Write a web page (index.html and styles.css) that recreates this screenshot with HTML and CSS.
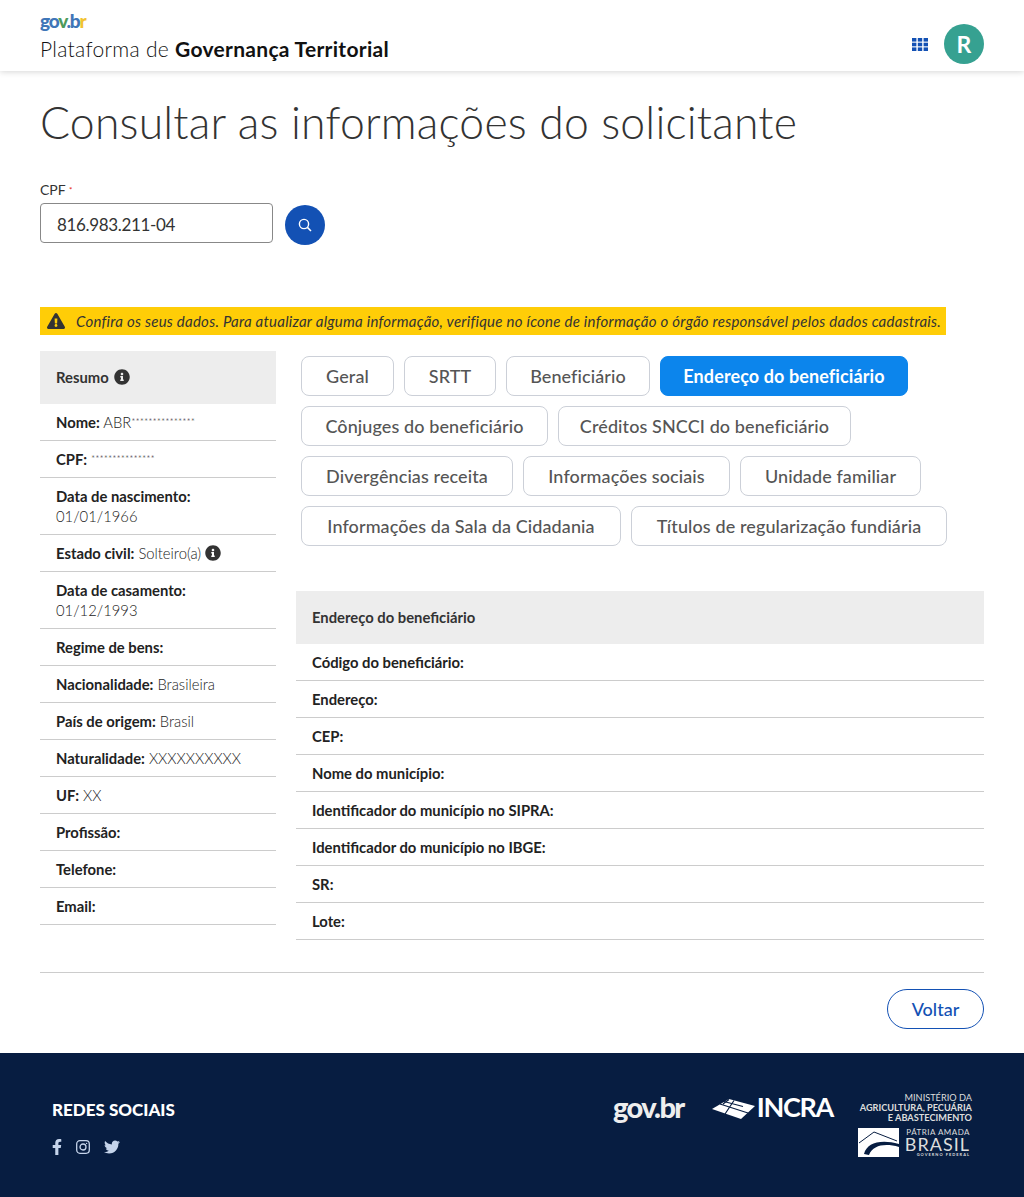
FILE: index.html
```html
<!DOCTYPE html>
<html lang="pt-BR">
<head>
<meta charset="UTF-8">
<meta name="viewport" content="width=device-width, initial-scale=1.0">
<title>Plataforma de Governança Territorial</title>
<link rel="stylesheet" href="styles.css">
</head>
<body>

<header class="topbar">
  <div class="brand">
    <div class="brand-logo"><span class="c-blue">go</span><span class="c-green">v</span><span class="c-blue">.b</span><span class="c-yellow">r</span></div>
    <div class="brand-name">Plataforma de <strong>Governança Territorial</strong></div>
  </div>
  <div class="topbar-actions">
    <svg class="apps-icon" viewBox="0 0 16 13" aria-hidden="true">
      <rect x="0" y="0" width="4.4" height="3.6"/><rect x="5.8" y="0" width="4.4" height="3.6"/><rect x="11.6" y="0" width="4.4" height="3.6"/>
      <rect x="0" y="4.7" width="4.4" height="3.6"/><rect x="5.8" y="4.7" width="4.4" height="3.6"/><rect x="11.6" y="4.7" width="4.4" height="3.6"/>
      <rect x="0" y="9.4" width="4.4" height="3.6"/><rect x="5.8" y="9.4" width="4.4" height="3.6"/><rect x="11.6" y="9.4" width="4.4" height="3.6"/>
    </svg>
    <div class="avatar">R</div>
  </div>
</header>

<main class="content">
  <h1>Consultar as informações do solicitante</h1>

  <div class="cpf-field">
    <label for="cpf">CPF <span class="req">*</span></label>
    <div class="cpf-row">
      <input id="cpf" type="text" value="816.983.211-04">
      <button class="search-btn" aria-label="Buscar">
        <svg viewBox="0 0 14 14" width="14" height="14"><circle cx="6" cy="6" r="4.6" fill="none" stroke="#fff" stroke-width="1.4"/><path d="M9.4 9.4L13 13" stroke="#fff" stroke-width="1.5"/></svg>
      </button>
    </div>
  </div>

  <div class="notice">
    <svg class="notice-icon" viewBox="0 0 576 512"><path d="M569.517 440.013C587.975 472.007 564.806 512 527.94 512H48.054c-36.937 0-59.999-40.055-41.577-71.987L246.423 23.985c18.467-32.009 64.72-31.951 83.154 0l239.94 416.028zM288 354c-25.405 0-46 20.595-46 46s20.595 46 46 46 46-20.595 46-46-20.595-46-46-46zm-43.673-165.346l7.418 136c.347 6.364 5.609 11.346 11.982 11.346h48.546c6.373 0 11.635-4.982 11.982-11.346l7.418-136c.375-6.874-5.098-12.654-11.982-12.654h-63.383c-6.884 0-12.356 5.78-11.981 12.654z"/></svg>
    <em>Confira os seus dados. Para atualizar alguma informação, verifique no ícone de informação o órgão responsável pelos dados cadastrais.</em>
  </div>

  <div class="columns">
    <aside class="summary">
      <div class="panel-head">Resumo <svg class="info" viewBox="0 0 512 512"><path d="M256 8C119.043 8 8 119.083 8 256c0 136.997 111.043 248 248 248s248-111.003 248-248C504 119.083 392.957 8 256 8zm0 110c23.196 0 42 18.804 42 42s-18.804 42-42 42-42-18.804-42-42 18.804-42 42-42zm56 254c0 6.627-5.373 12-12 12h-88c-6.627 0-12-5.373-12-12v-24c0-6.627 5.373-12 12-12h12v-64h-12c-6.627 0-12-5.373-12-12v-24c0-6.627 5.373-12 12-12h64c6.627 0 12 5.373 12 12v100h12c6.627 0 12 5.373 12 12v24z"/></svg></div>
      <div class="row"><b>Nome:</b> ABR<span class="mask">***************</span></div>
      <div class="row"><b>CPF:</b> <span class="mask">***************</span></div>
      <div class="row"><b>Data de nascimento:</b><br>01/01/1966</div>
      <div class="row"><b>Estado civil:</b> Solteiro(a) <svg class="info" viewBox="0 0 512 512"><path d="M256 8C119.043 8 8 119.083 8 256c0 136.997 111.043 248 248 248s248-111.003 248-248C504 119.083 392.957 8 256 8zm0 110c23.196 0 42 18.804 42 42s-18.804 42-42 42-42-18.804-42-42 18.804-42 42-42zm56 254c0 6.627-5.373 12-12 12h-88c-6.627 0-12-5.373-12-12v-24c0-6.627 5.373-12 12-12h12v-64h-12c-6.627 0-12-5.373-12-12v-24c0-6.627 5.373-12 12-12h64c6.627 0 12 5.373 12 12v100h12c6.627 0 12 5.373 12 12v24z"/></svg></div>
      <div class="row"><b>Data de casamento:</b><br>01/12/1993</div>
      <div class="row"><b>Regime de bens:</b></div>
      <div class="row"><b>Nacionalidade:</b> Brasileira</div>
      <div class="row"><b>País de origem:</b> Brasil</div>
      <div class="row"><b>Naturalidade:</b> XXXXXXXXXX</div>
      <div class="row"><b>UF:</b> XX</div>
      <div class="row"><b>Profissão:</b></div>
      <div class="row"><b>Telefone:</b></div>
      <div class="row"><b>Email:</b></div>
    </aside>

    <section class="details">
      <div class="tabs">
        <button class="tab w-geral">Geral</button>
        <button class="tab w-srtt">SRTT</button>
        <button class="tab w-benef">Beneficiário</button>
        <button class="tab w-end active">Endereço do beneficiário</button>
        <button class="tab w-conj">Cônjuges do beneficiário</button>
        <button class="tab w-cred">Créditos SNCCI do beneficiário</button>
        <button class="tab w-div">Divergências receita</button>
        <button class="tab w-info">Informações sociais</button>
        <button class="tab w-uni">Unidade familiar</button>
        <button class="tab w-sala">Informações da Sala da Cidadania</button>
        <button class="tab w-tit">Títulos de regularização fundiária</button>
      </div>

      <div class="panel-head">Endereço do beneficiário</div>
      <div class="row"><b>Código do beneficiário:</b></div>
      <div class="row"><b>Endereço:</b></div>
      <div class="row"><b>CEP:</b></div>
      <div class="row"><b>Nome do município:</b></div>
      <div class="row"><b>Identificador do município no SIPRA:</b></div>
      <div class="row"><b>Identificador do município no IBGE:</b></div>
      <div class="row"><b>SR:</b></div>
      <div class="row"><b>Lote:</b></div>
    </section>
  </div>

  <div class="actions">
    <button class="back-btn">Voltar</button>
  </div>
</main>

<footer class="footer">
  <div class="social">
    <div class="social-title">REDES SOCIAIS</div>
    <div class="social-icons">
      <svg width="10" height="16" viewBox="0 0 320 512"><path d="M279.14 288l14.22-92.66h-88.91v-60.13c0-25.35 12.42-50.06 52.24-50.06h40.42V6.26S260.43 0 225.36 0c-73.22 0-121.08 44.38-121.08 124.72v70.62H22.89V288h81.39v224h100.17V288z"/></svg>
      <svg class="insta" width="14" height="14" viewBox="0 0 14 14"><rect x="0.7" y="0.7" width="12.6" height="12.6" rx="3.2"/><circle cx="7" cy="7" r="3"/><circle class="dot" cx="10.6" cy="3.4" r="0.7"/></svg>
      <svg width="16" height="16" viewBox="0 0 512 512"><path d="M459.37 151.716c.325 4.548.325 9.097.325 13.645 0 138.72-105.583 298.558-298.558 298.558-59.452 0-114.68-17.219-161.137-47.106 8.447.974 16.568 1.299 25.34 1.299 49.055 0 94.213-16.568 130.274-44.832-46.132-.975-84.792-31.188-98.112-72.772 6.498.974 12.995 1.624 19.818 1.624 9.421 0 18.843-1.3 27.614-3.573-48.081-9.747-84.143-51.98-84.143-102.985v-1.299c13.969 7.797 30.214 12.67 47.431 13.319-28.264-18.843-46.781-51.005-46.781-87.391 0-19.492 5.197-37.36 14.294-52.954 51.655 63.675 129.3 105.258 216.365 109.807-1.624-7.797-2.599-15.918-2.599-24.04 0-57.828 46.782-104.934 104.934-104.934 30.213 0 57.502 12.67 76.67 33.137 23.715-4.548 46.456-13.32 66.599-25.34-7.798 24.366-24.366 44.833-46.132 57.827 21.117-2.273 41.584-8.122 60.426-16.243-14.292 20.791-32.161 39.308-52.628 54.253z"/></svg>
    </div>
  </div>
  <div class="partners">
    <div class="logo-gov">gov.br</div>
    <div class="logo-incra">
      <svg width="43" height="20" viewBox="0 0 43 20"><path d="M0 10L17 0l26 7-14 13z"/><path class="cuts" d="M8 5l28 9M22 1.5L13 15M12 2.5l19 5M17 0.5L11 5"/></svg>
      <span>INCRA</span>
    </div>
    <div class="logo-min">
      <div class="min-text">MINISTÉRIO DA<br><b>AGRICULTURA, PECUÁRIA<br>E ABASTECIMENTO</b></div>
      <div class="min-brasil">
        <svg width="41" height="29" viewBox="0 0 41 29"><rect width="41" height="29" fill="#fff"/><path d="M1 15L16 4l23 9" fill="none" stroke="#071d41" stroke-width="1"/><path d="M6 26C9 15 22 11 41 16v3C27 15 15 17 11 27z" fill="#071d41"/></svg>
        <div class="brasil-text"><span class="pa">PÁTRIA AMADA</span><span class="br">BRASIL</span><span class="gf">GOVERNO FEDERAL</span></div>
      </div>
    </div>
  </div>
</footer>

</body>
</html>
```

FILE: styles.css
```css
* { box-sizing: border-box; }
body { margin: 0; font-family: Lato, "Open Sans", sans-serif; color: #333; background: #fff; }
button { font-family: inherit; cursor: pointer; }

.c-blue { color: #3f76b8; }
.c-green { color: #4d9a5b; }
.c-yellow { color: #f2c230; }

/* top bar */
.topbar { height: 71px; padding: 0 40px; display: flex; justify-content: space-between; background: #fff; box-shadow: 0 1px 6px rgba(0, 0, 0, .16); }
.brand-logo { margin-top: 11px; height: 20px; font-size: 19px; line-height: 20px; font-weight: 900; letter-spacing: -1.2px; }
.brand-name { margin-top: 5px; font-size: 21px; line-height: 26px; font-weight: 300; color: #111; letter-spacing: .3px; }
.brand-name strong { font-weight: 700; }
.topbar-actions { display: flex; align-items: center; gap: 16px; padding-top: 17px; height: 71px; }
.apps-icon { width: 16px; height: 13px; fill: #1351b4; }
.avatar { width: 40px; height: 40px; border-radius: 50%; background: #36a191; color: #fff; font-size: 23px; font-weight: 700; display: flex; align-items: center; justify-content: center; }

/* page */
.content { padding: 0 40px; }
h1 { margin: 23px 0 0; font-size: 44.5px; line-height: 56px; font-weight: 300; color: #333; letter-spacing: .2px; }

.cpf-field { margin-top: 30px; }
.cpf-field label { display: block; height: 23px; font-size: 14px; line-height: 20px; font-weight: 400; color: #333; }
.req { color: #e52207; font-size: 8px; vertical-align: top; }
.cpf-row { display: flex; align-items: flex-start; gap: 12px; }
.cpf-row input { width: 233px; height: 40px; padding: 2px 16px 0; border: 1px solid #888; border-radius: 4px; font-family: inherit; font-size: 17px; letter-spacing: -.35px; color: #333; }
.search-btn { width: 40px; height: 40px; margin-top: 2px; border: 0; border-radius: 50%; background: #1351b4; display: flex; align-items: center; justify-content: center; padding: 0; }

.notice { width: 906px; height: 28px; margin-top: 62px; padding-left: 7px; display: flex; align-items: center; gap: 11px; background: #ffcd07; font-size: 15px; letter-spacing: .25px; color: #333; white-space: nowrap; }
.notice-icon { width: 18px; height: 16px; fill: #333; flex: none; }

.columns { display: flex; gap: 20px; margin-top: 16px; }
.summary { width: 236px; flex: none; }
.details { flex: 1; }

.panel-head { height: 53px; padding: 0 16px 2px; display: flex; align-items: center; gap: 5px; background: #ededed; font-size: 14.8px; font-weight: 700; color: #333; }
.row { height: 37px; padding: 8px 16px; border-bottom: 1px solid #ccc; font-size: 14.8px; line-height: 20px; font-weight: 300; color: #222; }
.row:has(br) { height: 57px; }
.row b { font-weight: 700; }
.info { width: 16px; height: 16px; fill: #333; vertical-align: -2px; }
.mask { font-size: 10px; line-height: 1; vertical-align: 3px; }

.tabs { display: flex; flex-wrap: wrap; gap: 10px; padding: 5px 0 0 5px; margin-bottom: 45px; }
.tab { height: 40px; padding: 0; border: 1px solid #ccd0d8; border-radius: 8px; background: #fff; font-size: 18px; font-weight: 500; letter-spacing: .1px; color: #555; white-space: nowrap; }
.tab.active { background: #0c85ec; border-color: #0c85ec; color: #fff; font-weight: 700; }
.w-geral { width: 93px; }
.w-srtt { width: 92px; }
.w-benef { width: 144px; }
.w-end { width: 248px; }
.w-conj { width: 247px; }
.w-cred { width: 293px; }
.w-div { width: 212px; }
.w-info { width: 207px; }
.w-uni { width: 181px; }
.w-sala { width: 320px; }
.w-tit { width: 316px; }

.actions { margin-top: 32px; padding-top: 16px; border-top: 1px solid #ccc; display: flex; justify-content: flex-end; }
.back-btn { width: 97px; height: 40px; border: 1px solid #1351b4; border-radius: 20px; background: #fff; color: #1351b4; font-size: 18px; font-weight: 500; }

/* footer */
.footer { height: 144px; margin-top: 24px; padding: 0 52px; display: flex; justify-content: space-between; background: #071d41; color: #fff; }
.social-title { margin-top: 47px; font-size: 17px; line-height: 20px; font-weight: 900; }
.social-icons { margin-top: 19px; display: flex; align-items: center; gap: 14px; }
.social-icons svg { fill: #c5d4eb; }
.social-icons .insta { fill: none; stroke: #c5d4eb; stroke-width: 1.3; }
.social-icons .insta .dot { fill: #c5d4eb; stroke: none; }

.partners { display: flex; align-items: flex-start; margin-top: 40px; }
.logo-gov { margin-top: -2px; margin-right: 28px; font-size: 29px; line-height: 32px; font-weight: 900; letter-spacing: -1.6px; color: #eee; }
.logo-incra { display: flex; align-items: center; margin-top: -2px; margin-right: 26px; gap: 2px; }
.logo-incra svg { fill: #fff; margin-top: 3px; }
.logo-incra .cuts { fill: none; stroke: #071d41; stroke-width: 1.2; }
.logo-incra span { font-size: 27px; line-height: 32px; font-weight: 700; letter-spacing: -1.3px; }
.logo-min { width: 113px; display: flex; flex-direction: column; align-items: flex-end; }
.min-text { font-size: 9.2px; line-height: 10px; text-align: right; color: #ddd; white-space: nowrap; font-weight: 400; }
.min-text b { font-weight: 700; }
.min-brasil { display: flex; gap: 6px; margin-top: 5px; padding-right: 2px; }
.brasil-text { display: flex; flex-direction: column; align-items: flex-end; color: #ddd; }
.pa { font-size: 8px; line-height: 9px; letter-spacing: .5px; }
.br { font-size: 18px; line-height: 15px; letter-spacing: 1px; }
.gf { font-size: 4px; line-height: 6px; letter-spacing: 1px; font-weight: 700; }
```
